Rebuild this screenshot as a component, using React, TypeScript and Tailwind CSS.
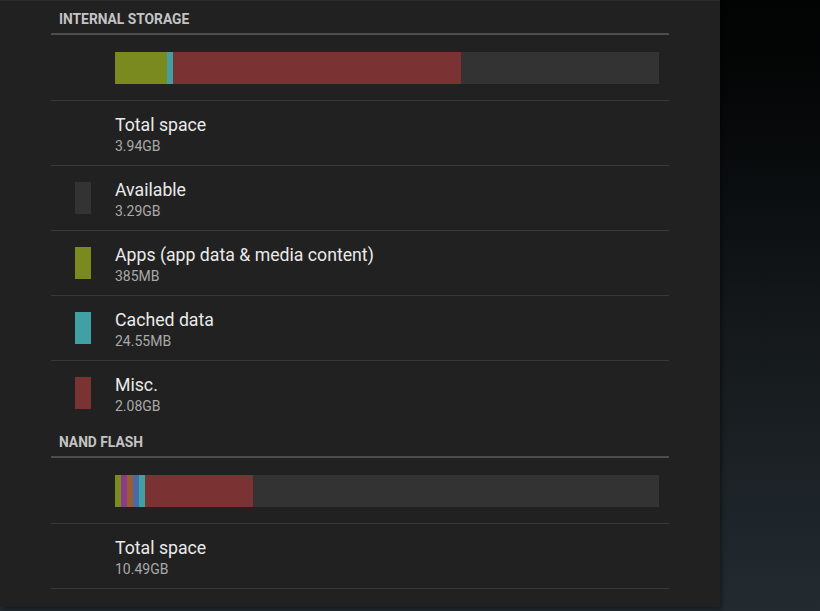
const font = { fontFamily: 'Roboto, "Noto Sans", sans-serif' }

type Seg = { w: number; color: string }
type Item = { title: string; sub: string; swatch?: string }

function Header({ label, top }: { label: string; top: string }) {
  return (
    <div className={`${top} pb-[4px] pl-[8px] border-b-2 border-[#4d4d4d]`}>
      <div className="text-[13.8px] leading-[20px] font-bold text-[#c4c4c4]">{label}</div>
    </div>
  )
}

function Bar({ segs }: { segs: Seg[] }) {
  return (
    <div className="pt-[17px] pb-[16px] pl-[64px] pr-[10px] border-b border-[#393939]">
      <div className="flex h-[32px] bg-[#333333]">
        {segs.map((s, i) => (
          <div key={i} style={{ width: s.w, background: s.color }} />
        ))}
      </div>
    </div>
  )
}

function Row({ item, last }: { item: Item; last?: boolean }) {
  return (
    <div className={`flex h-[65px] ${last ? '' : 'border-b border-[#393939]'}`}>
      <div className="w-[64px] pl-[24px] pt-[16px]">
        {item.swatch && <div className="w-[16px] h-[32px]" style={{ background: item.swatch }} />}
      </div>
      <div className="pt-[12px]">
        <div className="text-[17.7px] leading-[24px] text-[#eaeaea]">{item.title}</div>
        <div className="text-[14px] leading-[18px] text-[#a9a9a9]">{item.sub}</div>
      </div>
    </div>
  )
}

const internal: Item[] = [
  { title: 'Total space', sub: '3.94GB' },
  { title: 'Available', sub: '3.29GB', swatch: '#333333' },
  { title: 'Apps (app data & media content)', sub: '385MB', swatch: '#7a8a1f' },
  { title: 'Cached data', sub: '24.55MB', swatch: '#41a0a3' },
  { title: 'Misc.', sub: '2.08GB', swatch: '#7a3232' },
]

export default function App() {
  return (
    <div className="w-[820px] h-[611px] flex overflow-hidden bg-gradient-to-b from-[#020303] via-[#131719] to-[#232b31]" style={font}>
      <div className="w-[720px] h-[607px] bg-[#212121] border-t border-[#2b2b2b] shadow-[2px_2px_4px_rgba(0,0,0,0.4)]">
        <div className="mx-[51px]">
          <Header label="INTERNAL STORAGE" top="pt-[8px]" />
          <Bar
            segs={[
              { w: 52, color: '#7a8a1f' },
              { w: 6, color: '#41a0a3' },
              { w: 288, color: '#7a3232' },
            ]}
          />
          {internal.map((it, i) => (
            <Row key={it.title + i} item={it} last={i === internal.length - 1} />
          ))}
          <Header label="NAND FLASH" top="pt-[6px]" />
          <Bar
            segs={[
              { w: 6, color: '#7a8a1f' },
              { w: 6, color: '#8a3c8a' },
              { w: 6, color: '#9a5c30' },
              { w: 6, color: '#4a6aa6' },
              { w: 6, color: '#41a0a3' },
              { w: 108, color: '#7a3232' },
            ]}
          />
          <Row item={{ title: 'Total space', sub: '10.49GB' }} />
        </div>
      </div>
    </div>
  )
}
